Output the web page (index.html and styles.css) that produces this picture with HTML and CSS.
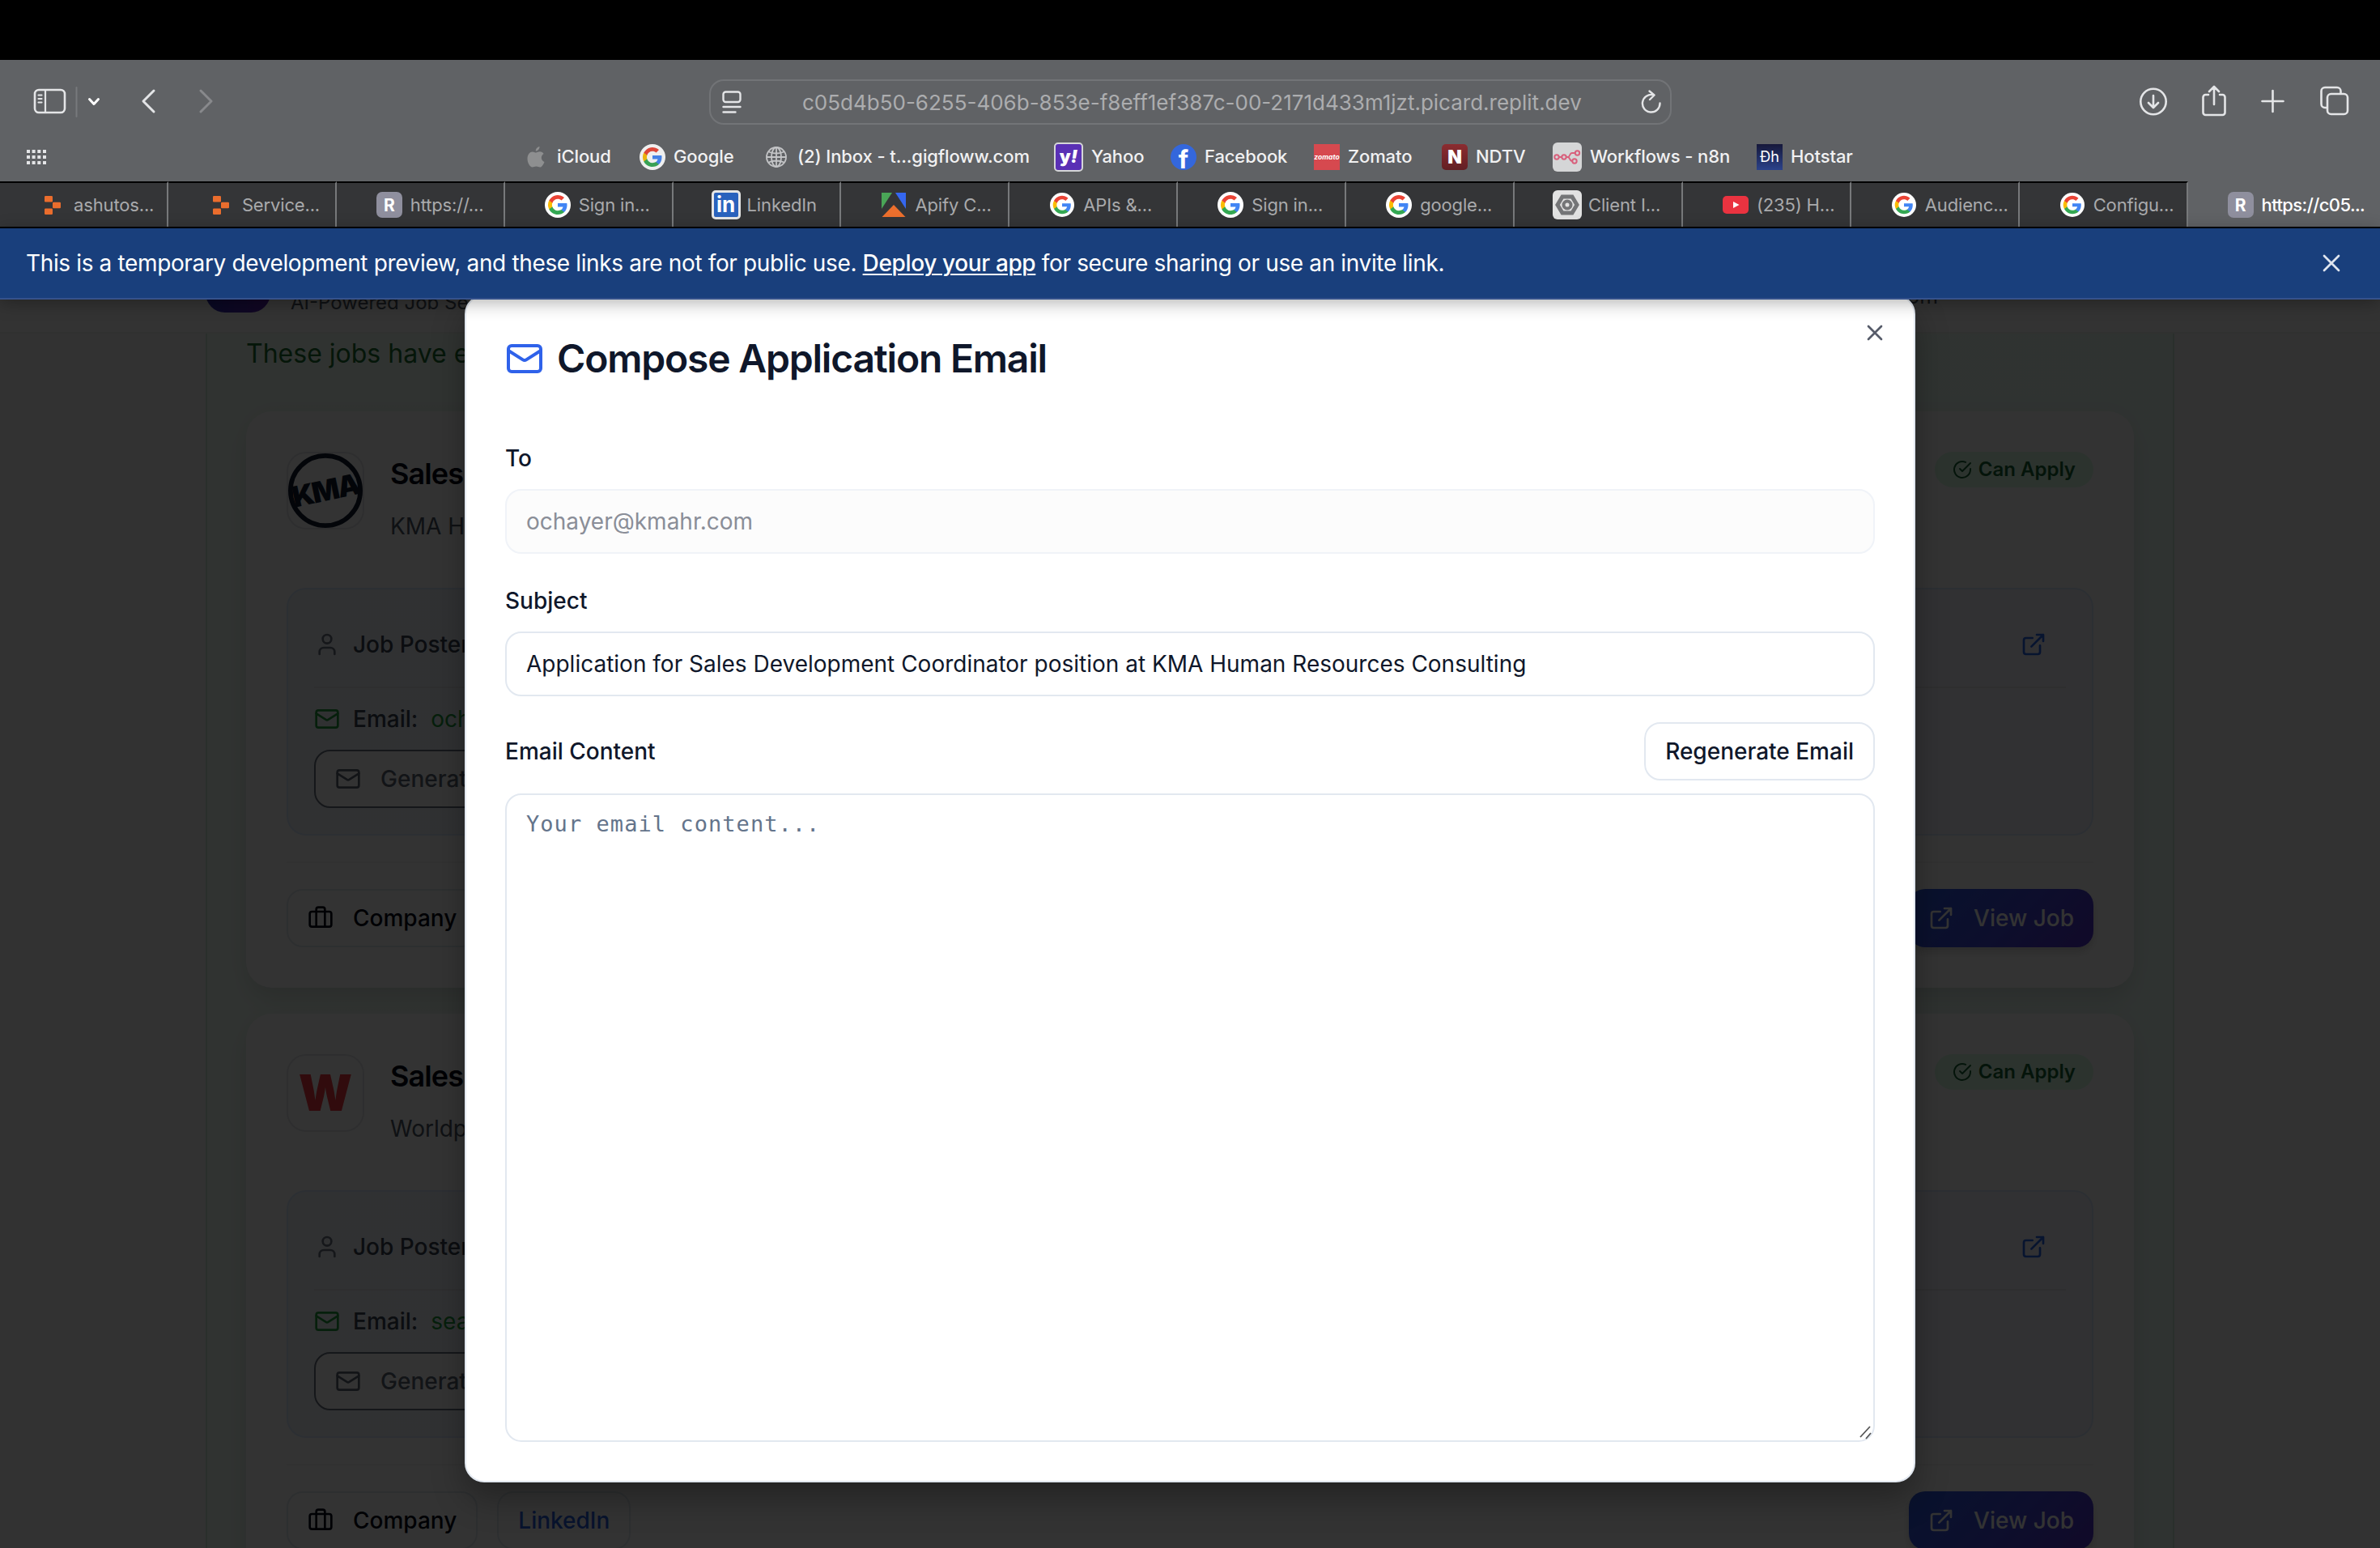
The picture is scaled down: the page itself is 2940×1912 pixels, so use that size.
FILE: index.html
```html
<!DOCTYPE html>
<html lang="en"><head><meta charset="utf-8"><title>Compose Application Email</title><link rel="stylesheet" href="styles.css"></head>
<body>
<svg class="defs" width="0" height="0">
<symbol id="mail" viewBox="0 0 24 24"><rect x="2" y="4" width="20" height="16" rx="2"/><path d="m22 7-8.97 5.7a1.94 1.94 0 0 1-2.06 0L2 7"/></symbol>
<symbol id="user" viewBox="0 0 24 24"><path d="M19 21v-2a4 4 0 0 0-4-4H9a4 4 0 0 0-4 4v2"/><circle cx="12" cy="7" r="4"/></symbol>
<symbol id="ext" viewBox="0 0 24 24"><path d="M15 3h6v6M10 14 21 3M18 13v6a2 2 0 0 1-2 2H5a2 2 0 0 1-2-2V8a2 2 0 0 1 2-2h6"/></symbol>
<symbol id="case" viewBox="0 0 24 24"><rect x="2" y="6" width="20" height="14" rx="2"/><path d="M16 20V4a2 2 0 0 0-2-2h-4a2 2 0 0 0-2 2v16"/></symbol>
<symbol id="check" viewBox="0 0 24 24"><path d="M22 11.08V12a10 10 0 1 1-5.93-9.14"/><path d="m9 11 3 3L22 4"/></symbol>
<symbol id="x" viewBox="0 0 24 24"><path d="M18 6 6 18M6 6l12 12"/></symbol>
<symbol id="g" viewBox="0 0 32 32"><circle cx="16" cy="16" r="16" fill="#fff"/><g transform="translate(4 4)"><path fill="#4285f4" d="M23.5 12.3c0-.9-.1-1.6-.2-2.3H12v4.5h6.500c-.3 1.5-1.100 2.800-2.400 3.600v3h3.900c2.200-2.100 3.500-5.100 3.500-8.800z"/><path fill="#34a853" d="M12 24c3.200 0 6-1.100 8-2.900l-3.900-3c-1.100.7-2.500 1.200-4.100 1.200-3.100 0-5.800-2.100-6.700-5H1.300v3.100C3.300 21.300 7.300 24 12 24z"/><path fill="#fbbc05" d="M5.300 14.300a7.200 7.200 0 0 1 0-4.600V6.600h-4a12 12 0 0 0 0 10.800z"/><path fill="#ea4335" d="M12 4.800c1.800 0 3.300.6 4.600 1.800L20 3.100A12 12 0 0 0 1.300 6.600l4 3.100c.9-2.800 3.600-4.900 6.700-4.900z"/></g></symbol>
<symbol id="blocks" viewBox="0 0 20 23"><g fill="#ea6d2d"><rect width="10" height="7.500" rx="1.200"/><rect x="10" y="7.700" width="10" height="7.500" rx="1.200"/><rect y="15.400" width="10" height="7.500" rx="1.200"/></g></symbol>
</svg>
<div class="notch"></div>
<header class="chrome">
 <div class="toolbar">
  <svg class="tb-left" width="300" height="110" viewBox="0 74 300 110" fill="none" stroke="#e4e5e7" stroke-width="2.6" stroke-linecap="round" stroke-linejoin="round"><rect x="43" y="111" width="37" height="28" rx="5"/><path d="M56 111v28M47.500 117.500h4M47.500 122h4M47.500 126.500h4" stroke-width="2.200"/><path d="M94.500 108v36" stroke="#77797c" stroke-width="2"/><path d="m110.500 122.500 5.500 6 5.500-6" stroke="#fff" stroke-width="3"/><path d="m190 112-13 13 13 13" stroke-width="3"/><path d="m248 112 13 13-13 13" stroke="#88898c" stroke-width="3"/></svg>
  <div class="url"><svg width="24" height="28" viewBox="0 0 24 28" fill="none" stroke="#e4e5e7" stroke-width="2.400" stroke-linecap="round"><rect x="1.500" y="1.500" width="21" height="12.500" rx="3"/><path d="M1.500 20h21M1.500 26.500h15"/></svg><span>c05d4b50-6255-406b-853e-f8eff1ef387c-00-2171d433m1jzt.picard.replit.dev</span><svg width="26" height="30" viewBox="0 0 26 30" fill="none" stroke="#e4e5e7" stroke-width="2.400" stroke-linecap="round" stroke-linejoin="round"><path d="M23.500 16.500a10.800 10.800 0 1 1-8-10.200M10.500 1.500l6 5-5.500 5.500"/></svg></div>
  <svg class="tb-right" width="320" height="110" viewBox="2620 74 320 110" fill="none" stroke="#e4e5e7" stroke-width="2.600" stroke-linecap="round" stroke-linejoin="round"><circle cx="2660" cy="125.500" r="15.700"/><path d="M2660 118v14M2654 127l6 6 6-6M2728 117h-3.500a3 3 0 0 0-3 3v19a3 3 0 0 0 3 3h21a3 3 0 0 0 3-3v-19a3 3 0 0 0-3-3h-3.500M2735 129v-21M2729 113l6-6 6 6M2807.500 112v26M2794.500 125h26"/><rect x="2875" y="116" width="25" height="25" rx="4.500"/><path d="M2874 133h-2a4.500 4.500 0 0 1-4.500-4.500v-16a4.500 4.500 0 0 1 4.500-4.500h15a4.500 4.500 0 0 1 4.500 4.500v2.500"/></svg>
 </div>
 <nav class="marks">
  <svg class="grid" width="24" height="18" viewBox="0 0 24 18" fill="#e4e5e7"><path d="M0 0h4v4H0zM6.600 0h4v4h-4zM13.300 0h4v4h-4zM20 0h4v4h-4zM0 7h4v4H0zM6.600 7h4v4h-4zM13.300 7h4v4h-4zM20 7h4v4h-4zM0 14h4v4H0zM6.600 14h4v4h-4zM13.300 14h4v4h-4zM20 14h4v4h-4z"/></svg>
  <a><svg width="22" height="26" viewBox="0 0 22 26" fill="#8e8f90"><path d="M15.500 0c.2 2.800-2 5.400-4.700 5.600C10.500 3 12.900.4 15.500 0zM11 7.500c1.300 0 2.700-1.200 4.900-1.200 1.900 0 3.700 1 4.700 2.600-4.200 2.600-3.400 8.300.9 10-1 2.800-3.200 6.600-5.400 6.600-1.700 0-2.500-1-4.700-1-2.100 0-3.100 1-4.700 1C3.500 25.500.5 19.800.5 15c0-5.500 3.200-8.600 6.300-8.600 1.900 0 3 1.100 4.200 1.100z"/></svg><span>iCloud</span></a>
  <a><svg width="32" height="32" opacity=".9"><use href="#g"/></svg><span>Google</span></a>
  <a><svg width="26" height="26" viewBox="0 0 26 26" fill="none" stroke="#c3c4c6" stroke-width="1.800"><circle cx="13" cy="13" r="12"/><ellipse cx="13" cy="13" rx="6" ry="12"/><path d="M13 1v24M1 13h24M3.500 6.500q9.500 4 19 0M3.500 19.500q9.500-4 19 0"/></svg><span class="inbox">(2) Inbox - t...gigfloww.com</span></a>
  <a><i class="fav yahoo">y<em>!</em></i><span>Yahoo</span></a>
  <a><i class="fav fb">f</i><span>Facebook</span></a>
  <a><i class="fav zom">zomato</i><span>Zomato</span></a>
  <a><i class="fav ndtv">N</i><span>NDTV</span></a>
  <a><svg width="36" height="36" viewBox="0 0 36 36" fill="none" stroke="#d8607c" stroke-width="2"><rect width="36" height="36" rx="6" fill="#d5d6d7" stroke="none"/><circle cx="5" cy="18" r="2.700"/><circle cx="14" cy="18" r="2.700"/><circle cx="30.500" cy="13" r="2.700"/><circle cx="27" cy="23" r="2.700"/><path d="M7.700 18h3.500M16.700 18h2c3 0 2-5 5-5h4M18.700 18c3 0 2 5 5.600 5"/></svg><span>Workflows - n8n</span></a>
  <a><i class="fav hot">Ðh</i><span>Hotstar</span></a>
 </nav>
 <div class="tabs">
  <a><b><svg width="20" height="23"><use href="#blocks"/></svg></b><span>ashutos...</span></a>
  <a><b><svg width="20" height="23"><use href="#blocks"/></svg></b><span>Service...</span></a>
  <a><b><i class="fav r">R</i></b><span>https://...</span></a>
  <a><b><svg width="32" height="32"><use href="#g"/></svg></b><span>Sign in...</span></a>
  <a><b><i class="fav in">in</i></b><span>LinkedIn</span></a>
  <a><b><svg width="32" height="32" viewBox="0 0 32 32"><path fill="#4aa557" d="M1 1h13L1 21z"/><path fill="#3567f0" d="M18 1h13v20z"/><path fill="#ec6f2d" d="m16 16 14.500 15h-29z"/></svg></b><span>Apify C...</span></a>
  <a><b><svg width="30" height="30"><use href="#g"/></svg></b><span>APIs &amp;...</span></a>
  <a><b><svg width="32" height="32"><use href="#g"/></svg></b><span>Sign in...</span></a>
  <a><b><svg width="32" height="32"><use href="#g"/></svg></b><span>google...</span></a>
  <a><b><svg class="wide" width="36" height="36" viewBox="0 0 36 36" fill="none" stroke="#747577" stroke-width="5"><rect width="36" height="36" rx="6" fill="#e2e2e2" stroke="none"/><path d="M12 8h12l6 10-6 10H12L6 18z"/><circle cx="18" cy="18" r="4.500" stroke-width="4"/></svg></b><span>Client I...</span></a>
  <a><b><svg width="32" height="22" viewBox="0 0 32 22"><rect width="32" height="22" rx="5" fill="#ea3340"/><path d="m13 7 7.500 4-7.500 4z" fill="#fff"/></svg></b><span>(235) H...</span></a>
  <a><b><svg width="30" height="30"><use href="#g"/></svg></b><span>Audienc...</span></a>
  <a><b><svg width="30" height="30"><use href="#g"/></svg></b><span>Configu...</span></a>
  <a class="on"><b><i class="fav r">R</i></b><span>https://c05...</span></a>
 </div>
</header>
<div class="banner"><p>This is a temporary development preview, and these links are not for public use. <u>Deploy your app</u> for secure sharing or use an invite link.</p><svg class="ic" width="36" height="36"><use href="#x"/></svg></div>
<main class="page">
 <div class="apphead"><div class="brand"></div><p>AI-Powered Job Se</p><p class="acct">om</p></div>
 <section class="zone">
  <p class="intro">These jobs have e</p>
  <article class="card">
   <div class="head"><svg class="logo" viewBox="0 0 96 96"><circle cx="48" cy="48" r="45" fill="none" stroke="#101a30" stroke-width="6"/><text x="48" y="61" text-anchor="middle" transform="rotate(-12 48 48)" class="kma">KMA</text></svg><div class="ttl"><h3>Sales</h3><p>KMA H</p></div><div class="badge"><svg class="ic" width="24" height="24"><use href="#check"/></svg>Can Apply</div></div>
   <div class="poster"><div class="prow"><svg class="ic gray" width="32" height="32"><use href="#user"/></svg><span>Job Poster</span><svg class="ic blue end" width="32" height="32"><use href="#ext"/></svg></div><div class="erow"><svg class="ic green" width="32" height="32"><use href="#mail"/></svg><span>Email:</span><em>och</em></div><div class="gen"><svg class="ic" width="32" height="32"><use href="#mail"/></svg>Generat</div></div>
   <div class="foot"><div class="btn"><svg class="ic" width="32" height="32"><use href="#case"/></svg>Company</div><div class="view"><svg class="ic" width="32" height="32"><use href="#ext"/></svg>View Job</div></div>
  </article>
  <article class="card">
   <div class="head"><svg class="logo box" viewBox="0 0 96 96"><text x="48" y="71" text-anchor="middle" class="w">W</text></svg><div class="ttl"><h3>Sales</h3><p>Worldp</p></div><div class="badge"><svg class="ic" width="24" height="24"><use href="#check"/></svg>Can Apply</div></div>
   <div class="poster"><div class="prow"><svg class="ic gray" width="32" height="32"><use href="#user"/></svg><span>Job Poster</span><svg class="ic blue end" width="32" height="32"><use href="#ext"/></svg></div><div class="erow"><svg class="ic green" width="32" height="32"><use href="#mail"/></svg><span>Email:</span><em>sea</em></div><div class="gen"><svg class="ic" width="32" height="32"><use href="#mail"/></svg>Generat</div></div>
   <div class="foot"><div class="btn"><svg class="ic" width="32" height="32"><use href="#case"/></svg>Company</div><div class="btn li">LinkedIn</div><div class="view"><svg class="ic" width="32" height="32"><use href="#ext"/></svg>View Job</div></div>
  </article>
 </section>
 <div class="overlay"></div>
</main>
<div class="modal">
 <svg class="ic close" width="32" height="32"><use href="#x"/></svg>
 <h2><svg class="ic" width="48" height="48"><use href="#mail"/></svg>Compose Application Email</h2>
 <label>To</label><div class="field off">ochayer@kmahr.com</div>
 <label>Subject</label><div class="field">Application for Sales Development Coordinator position at KMA Human Resources Consulting</div>
 <div class="crow"><label>Email Content</label><div class="regen">Regenerate Email</div></div>
 <div class="area">Your email content...<svg class="grip" width="16" height="18" viewBox="0 0 16 18" stroke="#555" stroke-width="1.800"><path d="M1 15 13 2M8 17l6-7"/></svg></div>
</div>
</body></html>
```

FILE: styles.css
```css
*{box-sizing:border-box;margin:0;padding:0}
body{width:2940px;height:1912px;overflow:hidden;background:#000;font-family:Inter,"Liberation Sans",sans-serif;font-size:28px;line-height:40px;color:#0f172a;position:relative;display:flex;flex-direction:column}
.defs{position:absolute}
svg{flex:none;display:block}
.ic{fill:none;stroke:currentColor;stroke-width:2;stroke-linecap:round;stroke-linejoin:round}
.notch{height:74px;flex:none;background:#000}
.chrome{height:208px;flex:none;background:#606265}
.toolbar{height:102px;display:flex;overflow:hidden}
.url{flex:none;margin:24px 555px 0 576px;width:1189px;height:56px;border:2px solid #727477;border-radius:18px;display:flex;align-items:center;padding:0 10px 0 14px;color:#acadaf;font-size:26px}
.url span{margin:2px auto 0 75px;white-space:nowrap;letter-spacing:0}
.marks{height:48px;padding:0 0 12px 33px;display:grid;grid-template-columns:618px 139px 156px 356px 144px 177px 158px 137px 252px 200px;align-items:center;color:#f1f1f2;font-size:22px;font-weight:500;line-height:28px;letter-spacing:-.1px}
.marks a,.tabs a{display:flex;align-items:center;gap:10px;white-space:nowrap}
.marks span{margin-top:-2px}
.marks a:nth-of-type(1){gap:15px}
.inbox{margin-left:3px}
.fav{display:flex;align-items:center;justify-content:center;width:32px;height:32px;flex:none;color:#fff;font-style:normal;font-weight:700;line-height:1;letter-spacing:0}
.yahoo{width:36px;height:36px;border:2px solid #d5d6d7;border-radius:5px;background:#5a30b5;font-size:22px;font-weight:900;padding-bottom:3px}
.fb{border-radius:50%;background:#3467dc;font-size:31px;padding-top:5px;overflow:hidden}
.zom{background:#d6494f;font-size:8.500px;font-style:italic}
.ndtv{background:linear-gradient(#8c2c30,#621f24);border-radius:5px;font-size:23px;font-weight:900}
.hot{background:linear-gradient(#16183a,#2b428a);font-size:18px;font-weight:400}
.r{border-radius:7px;background:#8f8f9e;font-size:21px}
.in{width:36px;height:36px;margin:0 -2px;border:3px solid #e6e6e6;border-radius:5px;background:#2a62bd;font-size:26px}
.wide{margin:0 -2px}
.tabs{height:58px;display:flex;color:#a9aaac;font-size:22px;line-height:28px;letter-spacing:-.15px;border-bottom:2px solid #000}
.tabs a{width:207.900px;flex:none;padding-left:49px;background:#343537;border-top:2px solid #000;border-right:2px solid #77797b}
.tabs b{width:32px;display:flex;justify-content:center}
.tabs a.on{width:237px;background:none;border:0;padding-top:2px;color:#fff;font-weight:500;letter-spacing:-.6px}
.banner{height:88px;flex:none;background:#193f7c;border-bottom:2px solid #35528c;color:#fff;display:flex;align-items:center;justify-content:space-between;padding:0 42px 0 32px;position:relative;z-index:5;box-shadow:0 4px 20px rgba(0,0,0,.3);letter-spacing:-.36px}
.banner u{font-weight:500;text-underline-offset:3px;text-decoration-thickness:2px}
.banner .ic{color:#dfe5ef;stroke-width:1.800}
.page{height:1542px;flex:none;position:relative;overflow:hidden;background:#fafafa}
.apphead{height:42px;background:#fcfcfc;border-bottom:2px solid #f0f2f1;display:flex;padding-left:254px;font-size:24px;line-height:30px;color:#4b5563}
.brand{width:80px;height:80px;border-radius:24px;margin:-64px 25px 0 0;background:linear-gradient(90deg,#2a2ab0,#5b1fb0)}
.apphead p{margin-top:-11px}
.apphead .acct{margin:-19px 546px 0 auto;font-size:26px}
.zone{margin:0 254px;padding:2px 48px;border:solid #d0ecda;border-width:0 2px;background:linear-gradient(90deg,#f0fdf4,#ecfdf5);height:1700px}
.intro{font-size:32px;line-height:46px;color:#1a6e30;margin-bottom:48px}
.card{height:712px;margin-bottom:32px;border-radius:32px;background:#fff;box-shadow:0 20px 30px -6px rgba(0,0,0,.1),0 0 30px rgba(0,0,0,.04);padding:50px;display:flex;flex-direction:column}
.head{display:flex;height:168px;align-items:flex-start}
.logo{width:96px;height:96px;border:2px solid #e5e7eb;border-radius:24px}
.kma{font:900 37px Inter,sans-serif;fill:#101a30;letter-spacing:-2px}
.w{font:900 64px Inter,sans-serif;fill:#f23a40}
.ttl{margin-left:32px;flex:1}
h3{font-size:36px;line-height:54px;font-weight:600;color:#000814;letter-spacing:-.9px}
.ttl p{color:#4b5563;margin-top:18px}
.badge{height:44px;padding:0 22px;border-radius:22px;background:#dcfce7;display:flex;align-items:center;gap:8px;font-size:24px;font-weight:600;color:#166534}
.poster{height:306px;border:2px solid #dbeafe;border-radius:24px;background:linear-gradient(90deg,#f0f4fb,#f5f3ff);padding:32px;font-weight:500;color:#374151}
.prow,.erow,.gen,.foot,.btn,.view{display:flex;align-items:center}
.prow{height:72px;gap:16px}
.end{margin:0 24px 0 auto}
.gray{color:#6b7280}.blue{color:#2563eb}.green,.erow em{color:#229c3c}
.erow{margin-top:16px;border-top:2px solid #e5e7eb;height:62px;padding-top:16px;gap:16px}
.erow em{font-style:normal;font-weight:400}
.gen{margin-top:16px;height:72px;width:330px;border:2px solid #6b7280;border-radius:20px;background:#fff;color:#5d6472;padding-left:24px;gap:24px;white-space:nowrap}
.foot{margin-top:32px;border-top:2px solid #f2f3f4;padding-top:32px;gap:24px;font-weight:500}
.btn,.view{height:72px;border:2px solid #e2e8f0;border-radius:20px;padding:0 24px;gap:24px;color:#020817}
.btn.li{color:#2b5fe0}
.view{margin-left:auto;border:0;background:linear-gradient(135deg,#2b5be0,#3f48dc 50%,#5530c8);color:#fff;box-shadow:0 6px 10px rgba(0,0,0,.15)}
.overlay{position:absolute;inset:0;background:rgba(0,0,0,.8)}
.modal{position:absolute;z-index:3;left:574px;top:364px;width:1792px;height:1467px;background:#fff;border:2px solid #e2e8f0;border-radius:24px;padding:48px;display:flex;flex-direction:column;box-shadow:0 20px 40px rgba(0,0,0,.3)}
.close{position:absolute;right:32px;top:29px;color:#565b69}
h2{display:flex;align-items:center;gap:16px;height:58px;font-size:48px;font-weight:600;letter-spacing:-1.200px;margin-bottom:80px}
h2 .ic{color:#2f62ea}
label{font-weight:500;line-height:28px;margin-bottom:24px}
.field{height:80px;flex:none;border:2px solid #e2e8f0;border-radius:20px;padding:0 24px;display:flex;align-items:center;margin-bottom:44px;white-space:nowrap}
.field.off{background:#fcfcfc;border-color:#f0f3f8;color:#8a8e98}
.crow{display:flex;justify-content:space-between;align-items:center;height:72px;margin:-12px 0 16px}
.crow label{margin:0}
.regen{height:72px;border:2px solid #e2e8f0;border-radius:20px;padding:0 24px;font-weight:500;display:flex;align-items:center}
.area{flex:1;border:2px solid #e2e8f0;border-radius:20px;padding:16px 24px;position:relative;font-family:"DejaVu Sans Mono",monospace;font-size:27px;letter-spacing:1.050px;color:#64748b}
.grip{position:absolute;right:1px;bottom:1px;fill:none}
```
